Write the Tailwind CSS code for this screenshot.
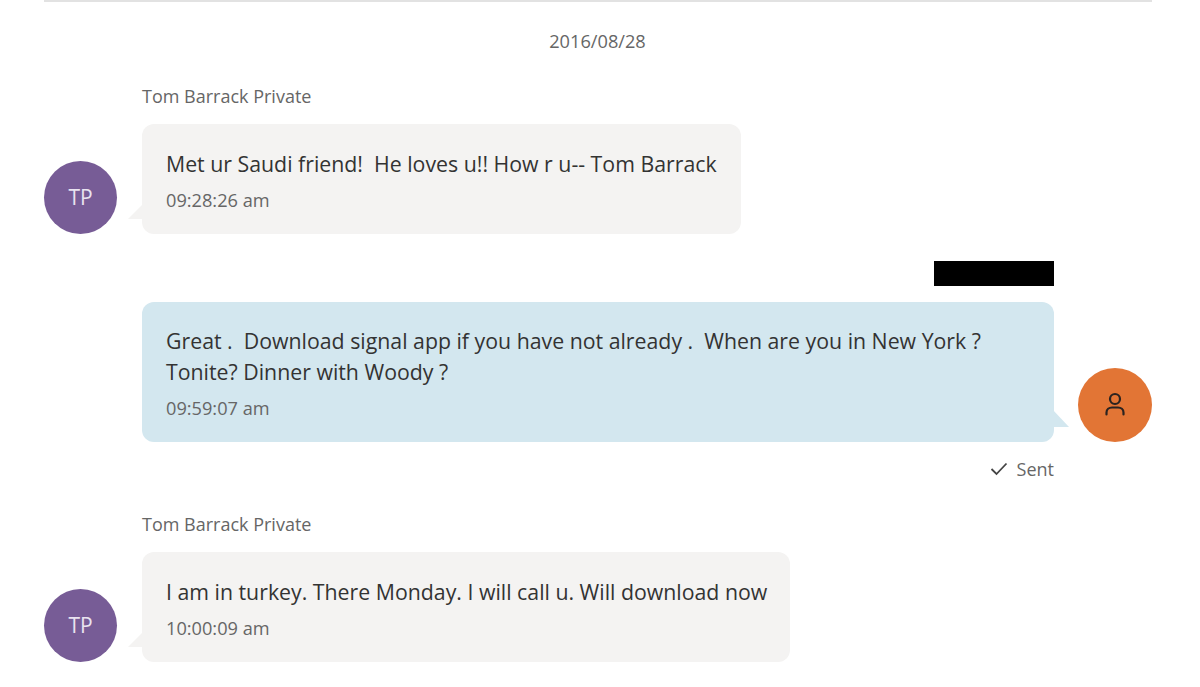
<!DOCTYPE html>
<html lang="en">
<head>
    <meta charset="UTF-8">
    <title>Messages</title>
    <script src="https://cdn.jsdelivr.net/npm/@tailwindcss/browser@4"></script>
</head>
<body class="bg-white font-['Open_Sans',sans-serif] text-[#333333] overflow-hidden">
    <div class="w-[1108px] h-[687px] ml-[44px] border-t-2 border-[#e2e2e2]">
        <p class="mt-[26px] h-[26px] pr-[1px] text-center text-[18.2px] leading-[26px] text-[#666666]">2016/08/28</p>

        <!-- incoming -->
        <p class="mt-[30px] h-[24px] ml-[98px] text-[18px] leading-[24px] text-[#666666]">Tom Barrack Private</p>
        <div class="mt-[16px] flex items-end gap-[25px]">
            <div class="w-[73px] h-[73px] rounded-full bg-[#775c96] text-[#e9e3f0] flex items-center justify-center text-[21px]">TP</div>
            <div class="relative w-[599px] h-[110px] rounded-[12px] bg-[#f4f3f2] px-[24px] pt-[25px]">
                <svg class="absolute left-[-14px] bottom-[15px]" width="15" height="15" viewBox="0 0 15 15"><path d="M15 0 L0 15 L15 15 Z" fill="#f4f3f2"/></svg>
                <p class="text-[21.3px] leading-[30px] whitespace-pre">Met ur Saudi friend!  He loves u!! How r u-- Tom Barrack</p>
                <p class="mt-[9px] text-[18.2px] leading-[24px] text-[#666666]">09:28:26 am</p>
            </div>
        </div>

        <!-- outgoing -->
        <div class="mt-[27px] ml-[890px] w-[120px] h-[25px] bg-black"></div>
        <div class="mt-[16px] flex items-end gap-[24px]">
            <div class="relative ml-[98px] w-[912px] h-[140px] rounded-[12px] bg-[#d3e7ef] px-[24px] pt-[23px]">
                <svg class="absolute right-[-15px] bottom-[15px]" width="16" height="17" viewBox="0 0 16 17"><path d="M0 0 L16 17 L0 17 Z" fill="#d3e7ef"/></svg>
                <p class="text-[21.3px] leading-[31px] whitespace-pre">Great .  Download signal app if you have not already .  When are you in New York ?
Tonite? Dinner with Woody ?</p>
                <p class="mt-[9px] text-[18.2px] leading-[24px] text-[#666666]">09:59:07 am</p>
            </div>
            <div class="w-[74px] h-[74px] rounded-full bg-[#e27535] flex items-center justify-center">
                <svg width="20" height="26" viewBox="0 0 20 26" fill="none" stroke="#2b2320" stroke-width="2.2" stroke-linecap="round"><circle cx="10" cy="7" r="5"/><path d="M1.5 22.5 V20.5 C1.5 17.5 4 15.5 7 15.5 H13 C16 15.5 18.5 17.5 18.5 20.5 V22.5"/></svg>
            </div>
        </div>
        <div class="mt-[15px] w-[1010px] h-[24px] flex items-center justify-end gap-[9px] text-[18px] leading-[24px] text-[#666666]">
            <svg width="18" height="14" viewBox="0 0 18 14" fill="none" stroke="#444444" stroke-width="1.8"><path d="M1.5 7 L6.5 12 L16.5 1.5"/></svg>
            <span>Sent</span>
        </div>

        <!-- incoming -->
        <p class="mt-[31px] h-[24px] ml-[98px] text-[18px] leading-[24px] text-[#666666]">Tom Barrack Private</p>
        <div class="mt-[16px] flex items-end gap-[25px]">
            <div class="w-[73px] h-[73px] rounded-full bg-[#775c96] text-[#e9e3f0] flex items-center justify-center text-[21px]">TP</div>
            <div class="relative w-[648px] h-[110px] rounded-[12px] bg-[#f4f3f2] px-[24px] pt-[25px]">
                <svg class="absolute left-[-14px] bottom-[15px]" width="15" height="15" viewBox="0 0 15 15"><path d="M15 0 L0 15 L15 15 Z" fill="#f4f3f2"/></svg>
                <p class="text-[21.3px] leading-[30px] whitespace-pre">I am in turkey. There Monday. I will call u. Will download now</p>
                <p class="mt-[9px] text-[18.2px] leading-[24px] text-[#666666]">10:00:09 am</p>
            </div>
        </div>
    </div>
</body>
</html>
